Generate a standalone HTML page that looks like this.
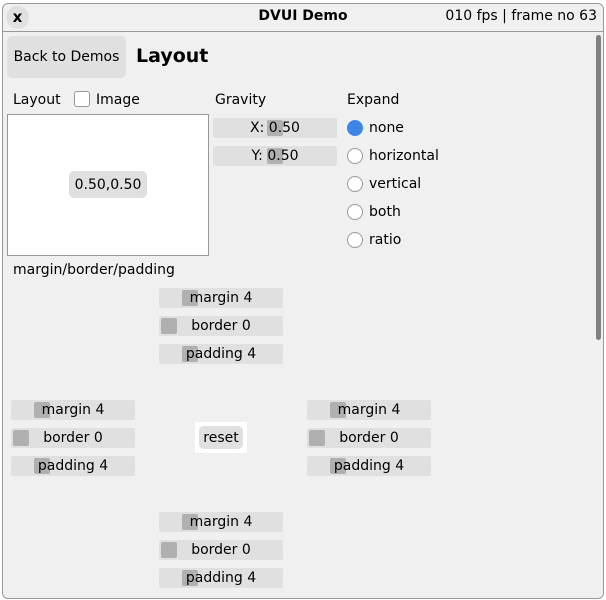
<!DOCTYPE html>
<html><head><style>
body{margin:0;width:606px;height:600px;background:#fff;font-family:"DejaVu Sans","Liberation Sans",sans-serif;font-size:14px;color:#000;position:relative;overflow:hidden}
.a{position:absolute;white-space:nowrap}
.win{left:2px;top:3px;width:600px;height:594px;border:1px solid #999;border-radius:6px;background:#f0f0f0}
.sl{position:absolute;width:124px;height:20px;background:#e0e0e0;border-radius:2px}
.sl .k{position:absolute;top:2px;width:16px;height:16px;background:#b0b0b0;border-radius:2px}
.sl .t{position:absolute;left:0;right:0;top:1px;text-align:center;line-height:18px}
.rad{position:absolute;width:14px;height:14px;border:1px solid #999;border-radius:50%;background:#fff}
</style></head><body>
<div class="a win"></div>
<div class="a" style="left:3px;top:31px;width:600px;height:1px;background:#999"></div>
<div class="a" style="left:6px;top:6px;width:23px;height:23px;border-radius:50%;background:#e0e0e0;text-align:center;line-height:23px;font-weight:bold;font-size:15px">x</div>
<div class="a" style="left:0;width:606px;top:8px;text-align:center;font-weight:bold">DVUI Demo</div>
<div class="a" style="right:9px;top:8px">010 fps | frame no 63</div>
<div class="a" style="left:596px;top:35px;width:5px;height:305px;background:#808080;border-radius:3px"></div>

<div class="a" style="left:7px;top:36px;width:119px;height:42px;background:#e0e0e0;border-radius:5px;text-align:center;line-height:42px">Back to Demos</div>
<div class="a" style="left:136px;top:45px;font-weight:bold;font-size:19px">Layout</div>

<div class="a" style="left:13px;top:92px">Layout</div>
<div class="a" style="left:74px;top:91px;width:14px;height:14px;border:1px solid #999;border-radius:3px;background:#fff"></div>
<div class="a" style="left:96px;top:92px">Image</div>
<div class="a" style="left:7px;top:114px;width:200px;height:140px;border:1px solid #999;background:#fff"></div>
<div class="a" style="left:69px;top:171px;width:78px;height:27px;background:#e0e0e0;border-radius:5px;text-align:center;line-height:28px">0.50,0.50</div>

<div class="a" style="left:215px;top:92px">Gravity</div>
<div class="sl" style="left:213px;top:118px"><div class="k" style="left:54px"></div><div class="t">X: 0.50</div></div>
<div class="sl" style="left:213px;top:146px"><div class="k" style="left:54px"></div><div class="t">Y: 0.50</div></div>

<div class="a" style="left:347px;top:92px">Expand</div>
<div class="rad" style="left:347px;top:120px;background:#3c87e6;border-color:#3c87e6"></div><div class="a" style="left:369px;top:120px">none</div>
<div class="rad" style="left:347px;top:148px"></div><div class="a" style="left:369px;top:148px">horizontal</div>
<div class="rad" style="left:347px;top:176px"></div><div class="a" style="left:369px;top:176px">vertical</div>
<div class="rad" style="left:347px;top:204px"></div><div class="a" style="left:369px;top:204px">both</div>
<div class="rad" style="left:347px;top:232px"></div><div class="a" style="left:369px;top:232px">ratio</div>

<div class="a" style="left:13px;top:262px">margin/border/padding</div>

<div class="sl" style="left:159px;top:288px"><div class="k" style="left:23px"></div><div class="t">margin 4</div></div>
<div class="sl" style="left:159px;top:316px"><div class="k" style="left:2px"></div><div class="t">border 0</div></div>
<div class="sl" style="left:159px;top:344px"><div class="k" style="left:23px"></div><div class="t">padding 4</div></div>

<div class="sl" style="left:11px;top:400px"><div class="k" style="left:23px"></div><div class="t">margin 4</div></div>
<div class="sl" style="left:11px;top:428px"><div class="k" style="left:2px"></div><div class="t">border 0</div></div>
<div class="sl" style="left:11px;top:456px"><div class="k" style="left:23px"></div><div class="t">padding 4</div></div>

<div class="a" style="left:195px;top:422px;width:52px;height:31px;background:#fff"></div>
<div class="a" style="left:199px;top:426px;width:44px;height:23px;background:#e0e0e0;border-radius:5px;text-align:center;line-height:24px">reset</div>

<div class="sl" style="left:307px;top:400px"><div class="k" style="left:23px"></div><div class="t">margin 4</div></div>
<div class="sl" style="left:307px;top:428px"><div class="k" style="left:2px"></div><div class="t">border 0</div></div>
<div class="sl" style="left:307px;top:456px"><div class="k" style="left:23px"></div><div class="t">padding 4</div></div>

<div class="sl" style="left:159px;top:512px"><div class="k" style="left:23px"></div><div class="t">margin 4</div></div>
<div class="sl" style="left:159px;top:540px"><div class="k" style="left:2px"></div><div class="t">border 0</div></div>
<div class="sl" style="left:159px;top:568px"><div class="k" style="left:23px"></div><div class="t">padding 4</div></div>
</body></html>
